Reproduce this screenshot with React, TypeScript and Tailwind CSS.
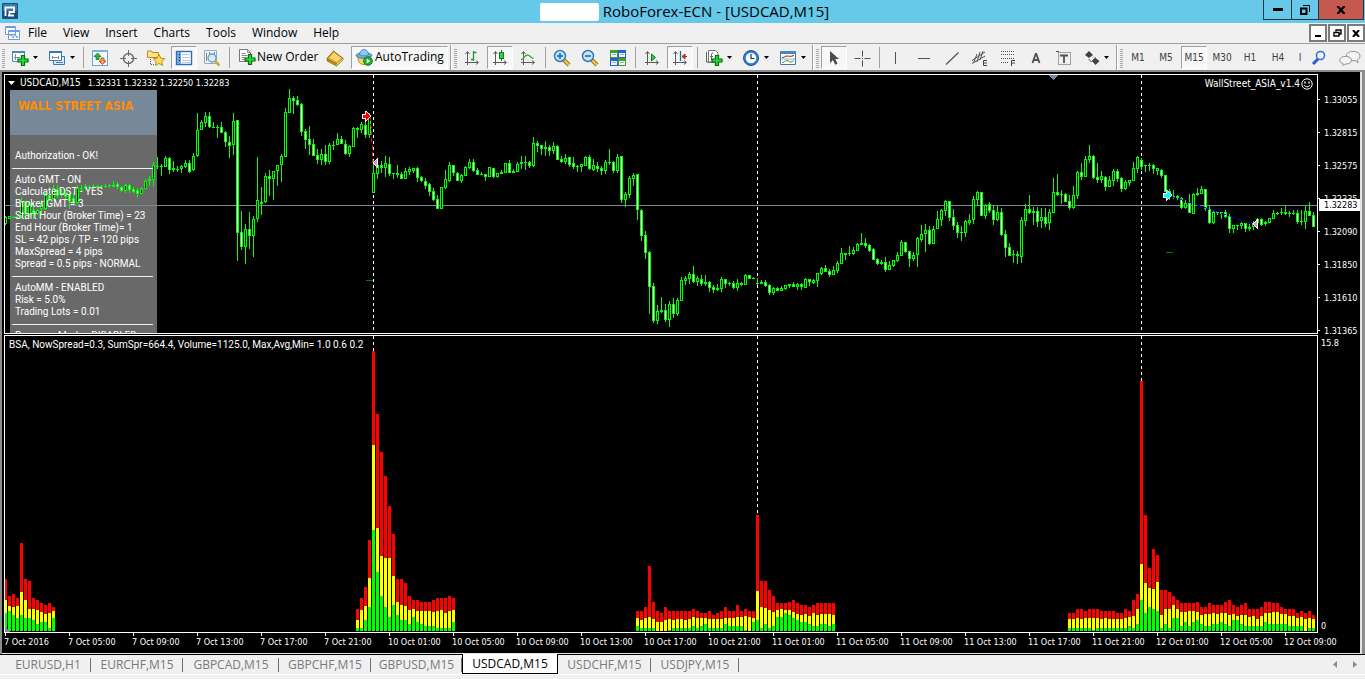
import type { ReactNode } from "react";

type Candle = [number, number, number, number, number];

interface Segment {
  first: number;
  base: number;
  rows: Candle[];
}

const STEP = 4;
const UNITS = 3;

/* Each row: high, low, body top, body bottom, 1 = falling. Three units make one pixel, counted down from base. */
const SEGMENTS: Segment[] = [
  {
    first: 0,
    base: -5,
    rows: [
      [438, 465, 442, 462, 0], [438, 447, 438, 446, 0], [438, 444, 441, 441, 0], [435, 447, 441, 441, 0],
      [382, 447, 395, 438, 0], [393, 450, 397, 432, 1], [393, 441, 402, 432, 0], [399, 447, 420, 430, 1],
      [417, 435, 420, 431, 0], [390, 432, 398, 418, 0], [366, 420, 375, 417, 0], [360, 393, 375, 388, 1],
      [345, 390, 354, 387, 0], [345, 384, 357, 378, 1], [357, 384, 369, 369, 0], [360, 387, 372, 380, 1],
      [360, 417, 372, 396, 1], [369, 402, 384, 399, 1], [345, 402, 354, 399, 0], [345, 366, 354, 354, 0],
      [342, 360, 348, 354, 1], [345, 357, 351, 351, 0], [342, 357, 348, 348, 0], [345, 354, 348, 348, 0],
      [345, 357, 348, 348, 0], [342, 354, 348, 348, 0], [342, 354, 345, 345, 0], [333, 351, 345, 351, 0],
      [336, 357, 342, 351, 1], [348, 366, 351, 363, 1], [342, 369, 345, 363, 0], [342, 369, 345, 360, 1],
      [351, 369, 357, 365, 1], [354, 384, 360, 371, 1], [351, 372, 357, 371, 0], [327, 357, 333, 357, 0],
      [318, 348, 327, 333, 0], [276, 348, 285, 330, 0], [261, 297, 288, 288, 0], [282, 318, 288, 288, 0],
      [258, 291, 264, 291, 0], [261, 312, 264, 300, 1], [273, 306, 294, 300, 1], [288, 306, 297, 297, 0],
    ],
  },
  {
    first: 44,
    base: 5,
    rows: [
      [255, 280, 258, 268, 0], [240, 265, 248, 260, 0], [240, 278, 248, 275, 1], [219, 272, 227, 270, 0],
      [98, 230, 150, 227, 0], [120, 150, 127, 150, 0], [97, 140, 107, 128, 0], [97, 143, 107, 141, 1],
      [127, 145, 141, 141, 0], [135, 173, 141, 141, 0], [127, 158, 141, 158, 1], [152, 200, 156, 187, 1],
      [168, 233, 187, 199, 1], [98, 225, 123, 196, 0], [120, 543, 120, 460, 1], [393, 510, 457, 502, 1],
      [432, 552, 447, 502, 0], [396, 507, 448, 469, 1], [408, 531, 418, 469, 0], [231, 426, 361, 418, 0],
      [320, 405, 366, 371, 1], [279, 368, 289, 367, 0], [270, 348, 288, 296, 1], [273, 360, 273, 297, 0],
      [255, 318, 256, 274, 0], [222, 306, 229, 256, 0], [84, 231, 97, 230, 0], [27, 99, 55, 98, 0],
      [48, 102, 54, 62, 1], [48, 77, 60, 74, 1], [69, 167, 72, 155, 1], [147, 207, 153, 179, 1],
      [138, 225, 178, 195, 1], [177, 228, 193, 227, 1], [207, 252, 226, 239, 1], [207, 255, 222, 239, 0],
      [195, 255, 222, 246, 1], [189, 252, 196, 246, 0], [183, 209, 195, 195, 0], [159, 195, 178, 195, 0],
      [168, 192, 178, 191, 1], [180, 224, 192, 221, 1], [195, 231, 199, 221, 0], [142, 201, 145, 200, 0],
      [142, 173, 144, 150, 1], [126, 159, 133, 149, 0], [126, 174, 136, 164, 1], [98, 174, 112, 164, 0],
      [240, 339, 279, 339, 0], [243, 297, 255, 281, 0], [243, 280, 256, 263, 1], [228, 291, 249, 264, 0],
      [231, 287, 252, 281, 1], [278, 297, 280, 280, 0], [255, 294, 279, 285, 1], [276, 297, 283, 297, 1],
      [264, 297, 273, 297, 0], [261, 285, 267, 275, 0], [264, 278, 264, 272, 0], [261, 305, 265, 294, 1],
      [288, 306, 292, 302, 1], [294, 326, 303, 317, 1], [310, 347, 313, 335, 1], [324, 363, 334, 359, 1],
      [346, 387, 358, 387, 1], [321, 387, 321, 387, 0], [270, 326, 298, 323, 0], [246, 305, 255, 302, 0],
      [255, 288, 256, 280, 1], [276, 303, 279, 302, 1], [282, 309, 286, 302, 0], [258, 288, 262, 287, 0],
      [237, 267, 247, 263, 0], [237, 276, 247, 273, 1], [264, 285, 271, 285, 1],
    ],
  },
  {
    first: 119,
    base: 45,
    rows: [
      [156, 165, 162, 162, 0], [162, 183, 162, 171, 1], [141, 171, 141, 171, 0], [144, 174, 144, 172, 1],
      [159, 174, 159, 172, 0], [150, 162, 156, 162, 0], [129, 159, 129, 159, 0], [120, 159, 129, 159, 1],
      [147, 159, 153, 159, 1], [126, 156, 132, 156, 0], [108, 147, 126, 132, 0], [108, 150, 126, 126, 0],
      [123, 144, 126, 138, 1], [51, 141, 69, 138, 0], [63, 96, 69, 78, 1], [75, 105, 75, 87, 1],
      [63, 108, 81, 87, 1], [76, 108, 81, 93, 1], [66, 102, 78, 93, 0], [75, 120, 78, 120, 1],
      [108, 129, 117, 126, 1], [102, 132, 114, 126, 0], [111, 141, 111, 135, 1], [111, 147, 129, 141, 1],
      [135, 156, 138, 138, 0], [132, 156, 132, 141, 0], [108, 138, 111, 138, 0], [105, 150, 111, 147, 1],
      [117, 153, 135, 150, 0], [126, 156, 138, 147, 1], [138, 165, 144, 153, 1], [120, 162, 126, 153, 0],
      [87, 135, 126, 126, 0], [123, 159, 126, 153, 1], [102, 159, 111, 153, 0], [108, 249, 108, 240, 1],
      [216, 261, 222, 240, 0], [168, 234, 174, 225, 0], [159, 198, 165, 177, 0], [162, 300, 162, 270, 1],
      [267, 363, 270, 348, 1], [333, 417, 345, 399, 1], [393, 582, 396, 501, 1], [489, 609, 498, 603, 1],
      [555, 612, 573, 603, 0], [531, 579, 570, 576, 0], [552, 606, 570, 600, 1], [543, 621, 552, 600, 0],
      [534, 594, 552, 582, 1], [534, 588, 540, 582, 0], [471, 543, 480, 543, 0], [468, 495, 474, 483, 0],
      [456, 492, 462, 477, 0], [438, 489, 462, 486, 1], [468, 498, 474, 486, 0], [465, 498, 477, 492, 1],
      [465, 498, 486, 492, 0], [483, 516, 486, 504, 1], [495, 519, 501, 510, 1], [492, 513, 504, 510, 0],
      [471, 516, 477, 507, 0], [477, 504, 477, 492, 1], [486, 498, 489, 489, 0], [483, 507, 489, 504, 1],
      [477, 513, 489, 504, 0], [486, 498, 489, 495, 0], [462, 495, 465, 495, 0], [465, 477, 465, 477, 1],
      [471, 477, 474, 474, 0], [474, 495, 489, 489, 0], [480, 492, 486, 492, 0], [480, 501, 486, 498, 1],
    ],
  },
  {
    first: 191,
    base: 55,
    rows: [
      [462, 495, 465, 489, 1], [471, 495, 474, 489, 0], [471, 483, 474, 483, 1], [468, 483, 474, 483, 0],
      [465, 480, 465, 477, 0], [462, 474, 462, 468, 0], [456, 471, 462, 471, 1], [459, 480, 462, 471, 0],
      [459, 480, 462, 471, 1], [444, 474, 447, 474, 0], [447, 468, 447, 456, 1], [447, 462, 450, 459, 0],
      [429, 471, 429, 453, 0], [411, 435, 414, 432, 0], [405, 426, 414, 426, 1], [417, 441, 423, 435, 1],
      [408, 435, 420, 435, 0], [393, 429, 399, 423, 0], [354, 402, 369, 402, 0], [369, 390, 369, 375, 0],
      [348, 378, 369, 369, 0], [351, 375, 360, 372, 0], [339, 363, 342, 363, 0], [309, 345, 339, 345, 0],
      [324, 354, 339, 348, 1], [342, 366, 345, 363, 1], [354, 390, 357, 390, 1], [384, 405, 387, 402, 1],
      [390, 405, 396, 402, 0], [381, 426, 396, 420, 1], [393, 420, 405, 420, 0], [390, 411, 390, 408, 0],
      [366, 396, 375, 393, 0], [330, 378, 336, 378, 0], [336, 369, 336, 366, 1], [363, 411, 363, 387, 1],
      [366, 393, 375, 387, 0], [321, 411, 324, 375, 0], [285, 336, 312, 330, 0], [282, 366, 300, 312, 0],
      [288, 345, 300, 342, 1], [288, 342, 297, 342, 0], [243, 297, 267, 297, 0], [237, 288, 240, 270, 0],
      [210, 258, 213, 243, 0], [213, 273, 213, 264, 1], [237, 300, 261, 288, 1], [276, 324, 285, 309, 1],
      [288, 333, 306, 306, 0], [270, 321, 273, 309, 0], [252, 285, 270, 279, 0], [198, 282, 207, 270, 0],
      [183, 228, 186, 210, 0], [186, 258, 186, 258, 1], [222, 267, 225, 258, 0], [216, 249, 222, 243, 1],
      [228, 285, 240, 270, 1], [228, 273, 246, 270, 0], [234, 318, 246, 315, 1], [300, 381, 312, 354, 1],
      [339, 378, 351, 378, 1], [360, 399, 372, 372, 0], [363, 402, 372, 378, 1], [261, 399, 270, 381, 0],
      [222, 288, 237, 273, 0], [195, 252, 237, 249, 1], [231, 285, 243, 249, 1], [231, 291, 243, 276, 1],
      [234, 294, 261, 273, 0], [234, 291, 261, 282, 1], [237, 300, 246, 279, 0],
    ],
  },
  {
    first: 262,
    base: -5,
    rows: [
      [324, 429, 366, 429, 0], [312, 378, 366, 375, 1], [360, 402, 372, 372, 0], [369, 396, 372, 396, 1],
      [375, 420, 393, 414, 1], [348, 417, 375, 414, 0], [303, 387, 306, 378, 0], [279, 330, 306, 321, 1],
      [258, 321, 267, 321, 0], [225, 279, 258, 270, 0], [255, 327, 258, 324, 1], [279, 339, 321, 330, 1],
      [303, 339, 318, 330, 0], [318, 363, 321, 351, 1], [318, 351, 330, 351, 0], [297, 348, 303, 333, 0],
      [297, 336, 303, 327, 1], [321, 366, 324, 357, 1], [330, 360, 336, 357, 0], [330, 348, 330, 339, 0],
      [276, 333, 294, 333, 0], [258, 309, 261, 297, 0], [264, 300, 270, 291, 1], [285, 306, 285, 285, 0],
      [279, 303, 285, 285, 0], [282, 312, 285, 297, 1], [294, 315, 294, 303, 0], [297, 324, 300, 318, 1],
      [315, 366, 315, 365, 1], [357, 390, 363, 378, 1], [360, 387, 378, 378, 0], [375, 390, 378, 384, 0],
      [381, 417, 384, 414, 1], [390, 417, 399, 414, 0], [372, 429, 399, 429, 1], [369, 432, 372, 432, 0],
      [354, 378, 369, 375, 0], [348, 372, 357, 372, 0], [357, 423, 357, 417, 1], [408, 462, 417, 459, 1],
      [423, 462, 426, 459, 0], [423, 435, 426, 426, 0], [425, 447, 426, 432, 0], [420, 444, 426, 441, 1],
      [432, 489, 438, 477, 1], [465, 489, 465, 477, 0], [465, 480, 465, 465, 0], [456, 477, 459, 468, 0],
      [459, 486, 459, 477, 1], [462, 483, 471, 477, 0], [453, 480, 459, 471, 0], [444, 465, 447, 459, 0],
      [444, 468, 447, 465, 1], [453, 468, 456, 462, 0], [444, 459, 444, 459, 0], [420, 447, 429, 447, 0],
      [426, 435, 429, 429, 0], [414, 435, 426, 426, 0], [405, 435, 426, 432, 1], [423, 441, 429, 429, 0],
      [420, 435, 429, 429, 0], [420, 462, 429, 456, 1], [420, 465, 453, 453, 0], [408, 477, 423, 456, 0],
      [396, 438, 423, 438, 1], [426, 471, 435, 471, 1],
    ],
  },
];

interface Histogram {
  first: number;
  max: number[];
  avg: number[];
  min: number[];
}

const HISTOGRAMS: Histogram[] = [
  {
    first: 0,
    max: [52, 35, 37, 33, 88, 52, 50, 33, 31, 28, 26, 28, 24],
    avg: [31, 25, 24, 25, 39, 31, 22, 22, 21, 19, 17, 18, 20],
    min: [18, 20, 16, 13, 16, 13, 13, 11, 7, 9, 9, 3, 13],
  },
  {
    first: 88,
    max: [22, 33, 44, 91, 280, 217, 179, 155, 125, 97, 52, 52, 48, 35, 31, 31, 29, 29, 29, 31, 33, 33, 33, 35, 33],
    avg: [11, 21, 25, 53, 186, 103, 75, 73, 73, 55, 29, 26, 25, 21, 22, 20, 20, 20, 20, 19, 20, 21, 18, 20, 21],
    min: [3, 3, 11, 24, 101, 59, 35, 24, 14, 26, 16, 11, 11, 7, 14, 9, 7, 5, 5, 5, 3, 3, 3, 3, 9],
  },
  {
    first: 158,
    max: [20, 20, 24, 65, 29, 20, 18, 24, 20, 20, 20, 20, 20, 20, 22, 20, 18, 18, 20, 16, 18, 20, 24, 20, 20, 26, 20, 22, 20, 20, 116, 50, 50, 41, 35, 28, 28, 28, 29, 31, 28, 26, 26, 24, 26, 28, 28, 28, 28, 28],
    avg: [13, 11, 13, 14, 12, 9, 9, 11, 12, 11, 12, 12, 11, 12, 14, 13, 13, 13, 12, 12, 12, 12, 13, 13, 13, 14, 14, 15, 14, 13, 40, 24, 23, 21, 19, 21, 22, 21, 21, 19, 17, 16, 17, 15, 18, 16, 17, 17, 17, 16],
    min: [5, 3, 3, 3, 3, 0, 0, 0, 1, 3, 3, 3, 3, 3, 5, 3, 5, 7, 3, 3, 3, 3, 7, 5, 5, 5, 5, 1, 0, 9, 11, 3, 7, 3, 5, 14, 14, 18, 16, 13, 11, 9, 9, 7, 5, 5, 7, 7, 5, 7],
  },
  {
    first: 266,
    max: [18, 18, 22, 22, 20, 22, 22, 22, 20, 20, 20, 20, 18, 18, 22, 20, 31, 37, 250, 116, 63, 82, 76, 41, 41, 39, 35, 31, 28, 28, 28, 28, 29, 24, 24, 28, 26, 26, 26, 29, 31, 26, 24, 26, 28, 22, 22, 22, 24, 29, 29, 28, 28, 24, 22, 22, 22, 18, 20, 18, 20, 16],
    avg: [12, 12, 13, 12, 13, 13, 13, 13, 12, 13, 12, 12, 12, 12, 13, 14, 15, 22, 67, 48, 43, 42, 49, 16, 22, 22, 26, 22, 19, 19, 20, 20, 19, 16, 17, 17, 18, 17, 18, 18, 16, 17, 15, 16, 16, 14, 15, 12, 15, 18, 18, 19, 19, 17, 17, 15, 15, 13, 14, 12, 13, 12],
    min: [3, 3, 3, 3, 3, 3, 1, 3, 3, 3, 3, 3, 3, 3, 3, 5, 3, 7, 31, 18, 24, 22, 20, 3, 7, 3, 13, 13, 5, 9, 5, 9, 11, 7, 5, 5, 7, 7, 9, 7, 5, 11, 11, 7, 5, 5, 5, 5, 5, 9, 7, 7, 7, 7, 7, 5, 5, 5, 5, 0, 3, 3],
  },
];

const PRICES = ["1.33055", "1.32815", "1.32575", "1.32335", "1.32090", "1.31850", "1.31610", "1.31365"];

const TIMES = [
  "7 Oct 2016", "7 Oct 05:00", "7 Oct 09:00", "7 Oct 13:00", "7 Oct 17:00", "7 Oct 21:00",
  "10 Oct 01:00", "10 Oct 05:00", "10 Oct 09:00", "10 Oct 13:00", "10 Oct 17:00", "10 Oct 21:00",
  "11 Oct 01:00", "11 Oct 05:00", "11 Oct 09:00", "11 Oct 13:00", "11 Oct 17:00", "11 Oct 21:00",
  "12 Oct 01:00", "12 Oct 05:00", "12 Oct 09:00",
];

const DAY_STARTS = [368, 752, 1136];

function PriceChart() {
  return (
    <svg className="absolute inset-0 h-full w-full" shapeRendering="crispEdges" role="img" aria-label="USDCAD M15 candles">
      <rect x="0" y="130" width="100%" height="1" fill="#778899" />
      {DAY_STARTS.map((x) => (
        <path key={x} d={`M${x + 0.5} 0V258`} stroke="#fff" strokeDasharray="3 3" />
      ))}
      <path d="M1043 0h10l-5 5z" fill="#778899" />
      {SEGMENTS.flatMap((s) =>
        s.rows.map(([high, low, top, bottom, down], i) => {
          const x = (s.first + i) * STEP;
          const y = (v: number) => Math.round(v / UNITS) + s.base;
          const h = Math.max(1, y(bottom) - y(top));
          return (
            <g key={x}>
              <rect x={x} y={y(high)} width="1" height={y(low) - y(high)} fill="#0f0" />
              <rect x={x - 1} y={y(top)} width="3" height={h} fill="#0f0" />
              {h > 2 && <rect x={x} y={y(top) + 1} width="1" height={h - 2} fill={down ? "#fff" : "#000"} />}
            </g>
          );
        }),
      )}
      <path d="M365.500 42L368 88" stroke="#f00" strokeDasharray="4 3" />
      <path d="M357 39h3v-3h1l5 5-5 5h-1v-3h-3z" fill="#f00" stroke="#fff" />
      <path d="M373 82v12l-6-6z" fill="#fff" />
      <path d="M372 84v8l-4-4z" fill="#ee82ee" />
      <path d="M361 205.500h7M1161 177.500h7" stroke="#008000" />
      <path d="M1165 121L1248 149" stroke="#00f" strokeDasharray="5 4" />
      <path d="M1158 118h3v-3h1l5 5-5 5h-1v-3h-3z" fill="#0ff" stroke="#fff" />
      <path d="M1253 143v12l-6-6z" fill="#fff" />
      <path d="M1252 145v8l-4-4z" fill="#ee82ee" />
    </svg>
  );
}

function SpreadChart() {
  return (
    <svg className="absolute inset-0 h-full w-full" shapeRendering="crispEdges" role="img" aria-label="Spread histogram">
      {DAY_STARTS.map((x) => (
        <path key={x} d={`M${x + 0.5} 0V290`} stroke="#fff" strokeDasharray="3 3" />
      ))}
      {HISTOGRAMS.flatMap((s) =>
        s.max.map((max, i) => {
          const x = (s.first + i) * STEP - 1;
          return (
            <g key={x}>
              <rect x={x} y={295 - max} width="3" height={max} fill="#f00" />
              <rect x={x} y={295 - s.avg[i]} width="3" height={s.avg[i]} fill="#ff0" />
              <rect x={x} y={295 - s.min[i]} width="3" height={s.min[i]} fill="#0f0" />
            </g>
          );
        }),
      )}
      <path d="M0 291v5h5z" fill="#778899" />
    </svg>
  );
}

/* Toolbar parts */

function Grip() {
  return <span className="h-5 w-[3px] shrink-0 bg-[repeating-linear-gradient(0deg,#a8a8a8_0_1px,#f0f0f0_1px_2px)]" />;
}

function Sep() {
  return (
    <span className="flex w-1 shrink-0 justify-center">
      <span className="h-[21px] w-px bg-[#a0a0a0]" />
    </span>
  );
}

function Divider() {
  return <span className="w-[2px] shrink-0 self-stretch border-l border-[#a0a0a0] bg-white" />;
}

function Tool({ label, pressed, children }: { label: string; pressed?: boolean; children: ReactNode }) {
  return (
    <button
      aria-label={label}
      aria-pressed={pressed}
      className={
        pressed
          ? "flex h-[23px] w-[26px] shrink-0 items-center justify-center border border-t-[#a0a0a0] border-r-white border-b-white border-l-[#a0a0a0] bg-[#f7f7f7]"
          : "flex h-[23px] w-[26px] shrink-0 items-center justify-center"
      }
    >
      {children}
    </button>
  );
}

function DropTool({ label, children }: { label: string; children: ReactNode }) {
  return (
    <button aria-label={label} className="flex h-[23px] w-[35px] shrink-0 items-center gap-1 pl-1">
      {children}
      <svg width="5" height="3" className="shrink-0">
        <path d="M0 0h5L2.500 3z" fill="#000" />
      </svg>
    </button>
  );
}

function Icon({ children, size = 18 }: { children: ReactNode; size?: number }) {
  return (
    <svg width={size} height={size} viewBox="0 0 18 18" fill="none" className="shrink-0">
      {children}
    </svg>
  );
}

const plus = <path d="M10.500 6.500h3v3.500h3.500v3h-3.500v3.500h-3v-3.500H7v-3h3.500z" fill="#1fe03a" stroke="#086b10" strokeWidth="1.200" />;
const axes = <path d="M4.500 3v13M2 13.500h13M2.500 5l2-2.500 2 2.500M13 11.500l2.500 2-2.500 2" stroke="#5a5a5a" />;

function Lens({ sign }: { sign: ReactNode }) {
  return (
    <Icon>
      <path d="M11 11l5 5" stroke="#9a7414" strokeWidth="4" />
      <path d="M11 11l5 5" stroke="#f3cf4e" strokeWidth="2" />
      <circle cx="7" cy="7" r="5.500" fill="#c4e6fa" stroke="#3b78b5" strokeWidth="1.500" />
      {sign}
    </Icon>
  );
}

function Toolbar() {
  return (
    <div className="flex h-[27px] items-center gap-[2px] overflow-hidden border-t border-[#a0a0a0] bg-[#f0f0f0] pt-px pl-[2px]">
      <Grip />
      <DropTool label="New chart">
        <Icon>
          <path d="M1.500 2.500h12v10h-12z" fill="#fff" stroke="#4a86c0" />
          <path d="M1 2h13v2H1z" fill="#4a86c0" />
          <path d="M4.500 5v6M3 8.500h6" stroke="#7a8ea3" />
          {plus}
        </Icon>
      </DropTool>
      <DropTool label="Profiles">
        <Icon>
          <path d="M5.500 7.500h11v8h-11z" fill="#dcebf8" stroke="#3b78b5" />
          <path d="M1.500 2.500h12v9h-12z" fill="#fff" stroke="#3b78b5" />
          <path d="M1 2h13v2H1zM8 13h7v1H8z" fill="#3b78b5" />
          <path d="M4 8.500h7M4.500 7v3M10.500 7v3" stroke="#7a8ea3" />
        </Icon>
      </DropTool>
      <Sep />
      <Tool label="Market Watch">
        <Icon>
          <rect x="1.500" y="1.500" width="15" height="15" fill="#f4f9fd" stroke="#6aa5d8" />
          <path d="M1 1h16v2H1z" fill="#7db4e2" />
          <path d="M6.500 4l3.500 3.500H8v3H5v-3H3z" fill="#33b53a" stroke="#147a1a" strokeWidth=".8" />
          <path d="M11.500 15.500L8 12h2V9h3v3h2z" fill="#f9a063" stroke="#c4430b" strokeWidth=".9" />
        </Icon>
      </Tool>
      <Tool label="Navigator">
        <Icon>
          <circle cx="9.500" cy="9.500" r="5" stroke="#6a6a6a" strokeWidth="1.400" />
          <path d="M9.500 1v6M9.500 12v6M1 9.500h6M12 9.500h6" stroke="#6a6a6a" />
        </Icon>
      </Tool>
      <Tool label="Favorites">
        <Icon>
          <path d="M.5 3.500V2h4l1 1.500h6v5H.5z" fill="#ffe08a" stroke="#b98b1b" />
          <path d="M3.500 10v5.500h4" stroke="#555" strokeDasharray="1 1" />
          <path d="M12 5.500l1.800 3.700 4 .5-3 2.800.8 4-3.600-2-3.600 2 .8-4-3-2.800 4-.5z" fill="#ffdc55" stroke="#b5861a" strokeWidth=".9" />
        </Icon>
      </Tool>
      <Tool label="Data Window" pressed>
        <Icon>
          <rect x="1.500" y="2.500" width="15" height="13" fill="#fff" stroke="#2e6fb3" strokeWidth="1.400" />
          <path d="M2 3h4v12H2z" fill="#6fa6d9" />
          <path d="M4 5.500h1M4 8.500h1M4 11.500h1" stroke="#123" />
          <path d="M7 5.500h8M7 8.500h8M7 11.500h8M7 13.500h8" stroke="#b8cbe0" />
        </Icon>
      </Tool>
      <Tool label="Strategy Tester">
        <Icon>
          <path d="M1.500 1.500h12v13h-12z" fill="#eef3f8" stroke="#9ab" />
          <path d="M3.500 4v8M6.500 3v4M11.500 3v3" stroke="#789" />
          <path d="M12 12l4.500 4.500" stroke="#d9a62e" strokeWidth="2.500" />
          <circle cx="9" cy="9" r="4" fill="#d5eafa" stroke="#6d9cc9" strokeWidth="1.300" />
        </Icon>
      </Tool>
      <Sep />
      <button className="flex h-[23px] w-[86px] shrink-0 items-center gap-px pb-px pl-[5px] text-xs whitespace-nowrap">
        <Icon>
          <path d="M1.500 1.500h8l3 3v9h-11z" fill="#fff" stroke="#777" />
          <path d="M9.500 1.500v3h3M3.500 5.500h4M3.500 7.500h6M3.500 9.500h4M3.500 11.500h3" stroke="#888" />
          {plus}
        </Icon>
        New Order
      </button>
      <button aria-label="MetaEditor" className="flex h-[23px] w-7 shrink-0 items-center justify-center">
        <Icon>
          <path d="M1 9.500L7.500 2 17 9.500l-6.500 7z" fill="#e5ac2c" stroke="#8f6410" />
          <path d="M3.500 8.500L8 3.500l7 5.500-4 4z" fill="#f8d673" />
          <path d="M1 10l9.500 4.500L17 9.500V11l-6.500 6L1 12z" fill="#c78a1a" stroke="#8f6410" strokeWidth=".6" />
          <path d="M10.500 15.500L16.500 10.500" stroke="#fff0c0" />
        </Icon>
      </button>
      <button
        aria-pressed="true"
        className="flex h-[23px] w-[97px] shrink-0 items-center gap-[2px] border border-t-[#a0a0a0] border-r-white border-b-white border-l-[#a0a0a0] bg-[#f7f7f7] pb-px pl-[3px] text-xs whitespace-nowrap"
      >
        <Icon>
          <path d="M3 9c0 5 2 7.500 6 7.500s6-3 6-7.500z" fill="#f6d560" stroke="#b28b22" />
          <ellipse cx="9" cy="7.500" rx="8" ry="2.800" fill="#6cb4dd" stroke="#3a7fae" />
          <path d="M4.500 7C5 2.500 7 1.500 9 1.500S13 2.500 13.500 7c-2.500 1.200-6.500 1.200-9 0z" fill="#8ccbed" stroke="#3a7fae" strokeWidth=".8" />
          <circle cx="13" cy="13" r="4.300" fill="#1fae2c" stroke="#0c7a17" />
          <path d="M11.700 10.500v5l3.600-2.500z" fill="#fff" />
        </Icon>
        AutoTrading
      </button>
      <Divider />
      <Grip />
      <Tool label="Bar chart">
        <Icon>
          {axes}
          <path d="M10.500 2v10M10.500 3.500h3M8 10.500h2.500" stroke="#1f9a2c" strokeWidth="1.300" />
        </Icon>
      </Tool>
      <Tool label="Candlesticks" pressed>
        <Icon>
          {axes}
          <path d="M10.500 1v11" stroke="#0f7d1a" />
          <rect x="8.500" y="3.500" width="4" height="6" fill="#35d044" stroke="#0f7d1a" />
        </Icon>
      </Tool>
      <Tool label="Line chart">
        <Icon>
          {axes}
          <path d="M2 11c3-1.500 4-5 6.500-5s3 3 6 3.500" stroke="#3fa54b" strokeWidth="1.300" />
        </Icon>
      </Tool>
      <Sep />
      <Tool label="Zoom in">
        <Lens sign={<path d="M4 7h6M7 4v6" stroke="#2f7ab8" strokeWidth="1.800" />} />
      </Tool>
      <Tool label="Zoom out">
        <Lens sign={<path d="M4 7h6" stroke="#2f7ab8" strokeWidth="1.800" />} />
      </Tool>
      <Tool label="Tile windows">
        <Icon>
          <path d="M1 1h8v8H1zM9 9h8v8H9z" fill="#3f9e2e" />
          <path d="M9 1h8v8H9zM1 9h8v8H1z" fill="#2a5fd0" />
          <path d="M2 4h6v4H2zM10 4h6v4h-6zM2 12h6v4H2zM10 12h6v4h-6z" fill="#eef6ff" />
          <path d="M3 5.500h4M11 5.500h4M3 13.500h4M11 13.500h4" stroke="#9ab6a0" />
        </Icon>
      </Tool>
      <Sep />
      <Tool label="Auto scroll">
        <Icon>
          {axes}
          <path d="M8.500 5v7l4-3.500z" fill="#35c443" stroke="#12801d" />
        </Icon>
      </Tool>
      <Tool label="Chart shift" pressed>
        <Icon>
          {axes}
          <path d="M9.500 2v10" stroke="#1d6b9d" strokeWidth="1.300" />
          <path d="M16 7.500h-3M14 5l-3 2.500 3 2.500z" fill="#d23a16" stroke="#a82a0c" />
        </Icon>
      </Tool>
      <Sep />
      <DropTool label="Indicators">
        <Icon>
          <path d="M3.500 1.500h7l2.500 2.500v9.500H3.500z" fill="#fff" stroke="#777" />
          <path d="M1.500 3v10h8M6.500 11V6c0-2 1-2 2-2M5 7.500h3" stroke="#666" />
          {plus}
        </Icon>
      </DropTool>
      <DropTool label="Periods">
        <Icon>
          <circle cx="9" cy="9" r="7.500" fill="#2f7ed0" stroke="#18559b" />
          <circle cx="9" cy="9" r="5.300" fill="#f4faff" />
          <path d="M9 5v4.500h3.500" stroke="#234" strokeWidth="1.200" />
        </Icon>
      </DropTool>
      <DropTool label="Templates">
        <Icon>
          <path d="M1.500 2.500h15v13h-15z" fill="#fff" stroke="#3b78b5" />
          <path d="M1 2h16v3H1z" fill="#4a86c0" />
          <path d="M3 8.500c3 0 3-1.500 5-1.500s3 1 7-.5" stroke="#8b1a12" />
          <path d="M3 13.500c2 0 3-2 5-2s2 2 4 1.500 2-1.500 3-1.500" stroke="#2f9a3a" />
          <path d="M2 10h14" stroke="#9ab" />
        </Icon>
      </DropTool>
      <Divider />
      <Grip />
      <Tool label="Cursor" pressed>
        <Icon>
          <path d="M5 2v12l3-3 2.200 4.800 2.300-1L10.300 10H14z" fill="#4a4a4a" />
        </Icon>
      </Tool>
      <Tool label="Crosshair">
        <Icon>
          <path d="M9.500 1.500v6M9.500 11.500v6M1.500 9.500h6M11.500 9.500h6M9 9.500h1" stroke="#505050" />
        </Icon>
      </Tool>
      <Sep />
      <Tool label="Vertical line">
        <Icon>
          <path d="M8.500 3v12" stroke="#505050" />
        </Icon>
      </Tool>
      <Tool label="Horizontal line">
        <Icon>
          <path d="M3 9.500h12" stroke="#505050" />
        </Icon>
      </Tool>
      <Tool label="Trendline">
        <Icon>
          <path d="M3 15.500L15.500 3.500" stroke="#505050" strokeWidth="1.200" />
        </Icon>
      </Tool>
      <Tool label="Equidistant channel">
        <Icon>
          <path d="M1 11.500L14 3M1 14.500L14 7M2.500 14L6 5M6 13L9 3M9 11l3-9" stroke="#505050" />
          <path d="M16 11.500h-3.500v5H16M12.500 14H16" stroke="#404040" />
        </Icon>
      </Tool>
      <Tool label="Fibonacci retracement">
        <Icon>
          <path d="M2 2.500h14M2 5.500h14M2 9.500h14M2 13.500h8" stroke="#505050" strokeDasharray="1 1" />
          <path d="M16 11.500h-3.500V17M12.500 14H16" stroke="#404040" />
        </Icon>
      </Tool>
      <Tool label="Text">
        <Icon>
          <path d="M5.500 14L8.700 5h.600L12.500 14M6.500 11h5" stroke="#505050" strokeWidth="1.800" />
        </Icon>
      </Tool>
      <Tool label="Text label">
        <Icon>
          <rect x="3.500" y="3.500" width="12" height="12" stroke="#505050" strokeDasharray="1 1" />
          <path d="M5 6.500h8M9 6.500V14" stroke="#505050" strokeWidth="1.800" />
          <path d="M1 2h3v1H1z" fill="#505050" />
        </Icon>
      </Tool>
      <button aria-label="Arrows" className="flex h-[23px] w-[35px] shrink-0 items-center gap-1 pl-[6px]">
        <svg width="15" height="14" viewBox="0 0 15 14" className="shrink-0">
          <path d="M0 4l4-4 4 4-4 3zM7 10l3.500-3L14.500 10l-4 4z" fill="#404040" />
          <path d="M3.500 8l3 3 4-5" fill="none" stroke="#505050" />
        </svg>
        <svg width="5" height="3" className="shrink-0">
          <path d="M0 0h5L2.500 3z" fill="#000" />
        </svg>
      </button>
      <Divider />
      <Grip />
      {["M1", "M5", "M15", "M30", "H1", "H4"].map((t) => (
        <Tool key={t} label={t} pressed={t === "M15"}>
          <span className="font-['DejaVu_Sans_Condensed','DejaVu_Sans',sans-serif] text-[10px] text-[#404040]">{t}</span>
        </Tool>
      ))}
      <span className="w-[14px] shrink-0 text-center font-['DejaVu_Sans_Condensed','DejaVu_Sans',sans-serif] text-[10px] text-[#404040]">I</span>
      <span className="ml-auto flex shrink-0 items-center gap-3 pr-1">
        <button aria-label="Search">
          <svg width="16" height="16" viewBox="0 0 16 16" fill="none">
            <path d="M7 9l-5 5" stroke="#2a5bd0" strokeWidth="3" />
            <circle cx="9.500" cy="5.500" r="4" fill="#f2f8ff" stroke="#3a6fe0" strokeWidth="1.600" />
          </svg>
        </button>
        <button aria-label="Chat">
          <svg width="22" height="16" viewBox="0 0 22 16" fill="#f4f4f4" stroke="#909090">
            <path d="M14 1.500c4 0 7 1.500 7 4.500 0 2-1 3-2.500 3.800l.5 3-3-2.300c-6 .5-8.500-1.500-8.500-4.500s2.500-4.500 6.500-4.500z" />
            <path d="M6.500 6.500c3.500 0 6 1.300 6 3.800s-2.500 3.700-6 3.700L4 15.500v-2C2 12.800.8 12 .8 10.300c0-2.500 2.300-3.800 5.700-3.800z" />
          </svg>
        </button>
      </span>
    </div>
  );
}

const TABS = [
  { name: "EURUSD,H1", cls: "w-[91px] pl-[5px]" },
  { name: "EURCHF,M15", cls: "w-[92px]" },
  { name: "GBPCAD,M15", cls: "w-[96px]" },
  { name: "GBPCHF,M15", cls: "w-[92px]" },
  { name: "GBPUSD,M15", cls: "w-[91px]" },
  { name: "USDCAD,M15", cls: "w-[96px]" },
  { name: "USDCHF,M15", cls: "w-[93px]" },
  { name: "USDJPY,M15", cls: "w-[88px]" },
];

export default function App() {
  return (
    <div className="flex min-h-screen flex-col bg-[#f0f0f0] font-['Open_Sans','Noto_Sans',sans-serif] text-black">
      <header className="flex h-[23px] items-start bg-[#66c9ea]">
        <svg width="16" height="16" viewBox="0 0 16 16" className="mt-[3px] ml-[2px] shrink-0">
          <rect width="16" height="16" rx="1" fill="#1c4f7e" />
          <rect x="1" y="1" width="14" height="7" fill="#3d79a8" />
          <path d="M3.500 13V4.500h8.500v4.500H7.500V12.500M6 12.500h6" fill="none" stroke="#fff" strokeWidth="1.800" />
        </svg>
        <div className="flex h-[23px] flex-1 items-center justify-center gap-1 pl-[88px]">
          <span className="h-[18px] w-[59px] rounded-[2px] bg-white" />
          <h1 className="pb-[2px] text-[15px] leading-5 whitespace-nowrap">RoboForex-ECN - [USDCAD,M15]</h1>
        </div>
        <div className="mr-px flex h-5 shrink-0">
          <button aria-label="Minimize" className="flex w-[29px] items-center justify-center border border-t-0 border-[#1c3844]">
            <svg width="10" height="3"><path d="M0 0h10v3H0z" /></svg>
          </button>
          <button aria-label="Restore" className="flex w-[26px] items-center justify-center border-b border-[#1c3844]">
            <svg width="10" height="10" viewBox="0 0 10 10" fill="none" stroke="#000">
              <path d="M1 3.500h5.500V9H1z" strokeWidth="2" />
              <path d="M3 .5h6.500V7" />
            </svg>
          </button>
          <button aria-label="Close" className="flex w-[46px] items-center justify-center border border-t-0 border-[#1c3844] bg-[#c4594f]">
            <svg width="10" height="8" viewBox="0 0 10 8"><path d="M1.500 0l7 8M8.500 0l-7 8" stroke="#000" strokeWidth="2.200" /></svg>
          </button>
        </div>
      </header>

      <nav className="flex h-5 items-center gap-4 pl-[5px] text-xs">
        <svg width="15" height="14" viewBox="0 0 15 14" fill="#fff" stroke="#6f9be0" className="-mr-2 shrink-0">
          <path d="M.5.500h10v8H.5zM3.500 4.500h11v9h-11z" />
          <path d="M1 1.500h9M4 5.500h10M5 10l1-2 2 4 2-4 2 4 1-2" fill="none" />
        </svg>
        {["File", "View", "Insert", "Charts", "Tools", "Window", "Help"].map((m) => (
          <button key={m}>{m}</button>
        ))}
        <span className="ml-auto flex gap-px">
          <button aria-label="Minimize chart" className="flex h-[18px] w-[18px] items-end justify-center border-2 border-[#7a7a7a] bg-white pb-[3px]">
            <svg width="6" height="2"><path d="M0 0h6v2H0z" /></svg>
          </button>
          <button aria-label="Restore chart" className="flex h-[18px] w-[18px] items-center justify-center border-2 border-[#7a7a7a] bg-white">
            <svg width="9" height="8" viewBox="0 0 9 8" fill="none" stroke="#000">
              <path d="M3 2.500V1h5v4H6.500M1 3.500h5V7H1z" strokeWidth="1.400" />
            </svg>
          </button>
          <button aria-label="Close chart" className="flex h-[18px] w-[18px] items-center justify-center border-2 border-[#7a7a7a] bg-white">
            <svg width="8" height="7" viewBox="0 0 8 7"><path d="M1 0l6 7M7 0L1 7" stroke="#000" strokeWidth="2" /></svg>
          </button>
        </span>
      </nav>

      <Toolbar />

      <main className="flex border-t-2 border-r-[3px] border-l-2 border-[#8c8c8c] font-['DejaVu_Sans_Condensed','DejaVu_Sans',sans-serif] text-[9px] leading-3 text-white">
        <div className="flex min-w-0 flex-1 border-r-2 border-b border-[#e4e4e4] bg-black pt-[2px] pl-[2px]">
          <div className="min-w-0 flex-1">
            <section className="relative h-[260px] overflow-hidden border border-white">
              <div className="absolute top-[15px] left-[5px] h-full w-[147px] bg-[#696969]">
                <div className="h-[45px] bg-[#778899]" />
              </div>
              <PriceChart />
              <div className="absolute top-[2px] left-[3px] flex items-center gap-[5px]">
                <svg width="7" height="4"><path d="M0 0h7L3.500 4z" fill="#fff" /></svg>
                <p className="flex gap-[7px]">
                  <span className="text-[10px]">USDCAD,M15</span>
                  <span>1.32331 1.32332 1.32250 1.32283</span>
                </p>
              </div>
              <div className="absolute top-[3px] right-1 flex items-center gap-px text-[10px]">
                <p>WallStreet_ASIA_v1.4</p>
                <svg width="12" height="12" viewBox="0 0 12 12" fill="none" stroke="#fff">
                  <circle cx="6" cy="6" r="5.200" />
                  <path d="M4 3.500v2M8 3.500v2" strokeWidth="1.400" />
                  <path d="M3 7c1 2.300 5 2.300 6 0" />
                </svg>
              </div>
              <div className="absolute top-[15px] left-[5px] w-[147px] font-['Roboto',sans-serif] text-[10px] whitespace-nowrap">
                <h2 className="h-[60px] pt-2 pl-2 font-['DejaVu_Sans_Condensed','DejaVu_Sans',sans-serif] text-xs leading-4 font-bold text-[#ff8c00]">
                  WALL STREET ASIA
                </h2>
                <div className="pl-[5px]">
                  <p>Authorization - OK!</p>
                  <hr className="mt-[6px] mr-1 mb-[5px] -ml-[3px] border-white/90" />
                  <p>Auto GMT - ON</p>
                  <p>Calculate DST - YES</p>
                  <p>Broker GMT = 3</p>
                  <p>Start Hour (Broker Time) = 23</p>
                  <p>End Hour (Broker Time)= 1</p>
                  <p>SL = 42 pips / TP = 120 pips</p>
                  <p>MaxSpread = 4 pips</p>
                  <p>Spread = 0.5 pips - NORMAL</p>
                  <hr className="mt-[6px] mr-1 mb-[5px] -ml-[3px] border-white/90" />
                  <p>AutoMM - ENABLED</p>
                  <p>Risk = 5.0%</p>
                  <p>Trading Lots = 0.01</p>
                  <hr className="mt-[6px] mr-1 mb-[5px] -ml-[3px] border-white/90" />
                  <p>Recovery Mode - DISABLED</p>
                </div>
              </div>
            </section>
            <section className="relative mt-px h-[298px] overflow-hidden border border-white">
              <SpreadChart />
              <p className="absolute top-[3px] left-1 font-['Roboto',sans-serif] text-[10px] whitespace-nowrap">
                BSA, NowSpread=0.3, SumSpr=664.4, Volume=1125.0, Max,Avg,Min= 1.0 0.6 0.2
              </p>
            </section>
            <ol className="flex h-5 whitespace-nowrap">
              {TIMES.map((t) => (
                <li key={t} className="w-16 shrink-0">
                  <span className="ml-px block h-[3px] w-px bg-white" />
                  {t}
                </li>
              ))}
            </ol>
          </div>
          <aside className="w-[42px] shrink-0">
            <div className="relative h-[260px] pt-[9px]">
              <ul>
                {PRICES.map((p) => (
                  <li key={p} className="flex h-[33px] items-center gap-1">
                    <span className="h-px w-[2px] bg-white" />
                    {p}
                  </li>
                ))}
              </ul>
              <p className="absolute top-[125px] right-0 left-px bg-white pl-[5px] text-black">1.32283</p>
            </div>
            <div className="flex h-[298px] flex-col justify-between pt-[3px] pl-[3px]">
              <span>15.8</span>
              <span>0</span>
            </div>
          </aside>
        </div>
      </main>

      <footer className="flex h-[21px] items-stretch border-t border-b border-t-black border-b-white text-xs text-[#7a7a7a]">
        {TABS.map((t) => {
          const active = t.name === "USDCAD,M15";
          return (
            <button
              key={t.name}
              className={`${t.cls} shrink-0 whitespace-nowrap ${active ? "-mt-px border border-t-0 border-black bg-white text-black" : "bg-[linear-gradient(#707070,#707070)] bg-[length:1px_14px] bg-[position:right_3px] bg-no-repeat"}`}
            >
              {t.name}
            </button>
          );
        })}
        <span className="ml-auto flex items-center gap-[14px] pr-[7px]">
          <button aria-label="Scroll tabs left">
            <svg width="6" height="7"><path d="M5 0v7L1 3.500z" fill="#8a8a8a" /></svg>
          </button>
          <button aria-label="Scroll tabs right">
            <svg width="6" height="7"><path d="M1 0v7l4-3.500z" fill="#8a8a8a" /></svg>
          </button>
        </span>
      </footer>
    </div>
  );
}
